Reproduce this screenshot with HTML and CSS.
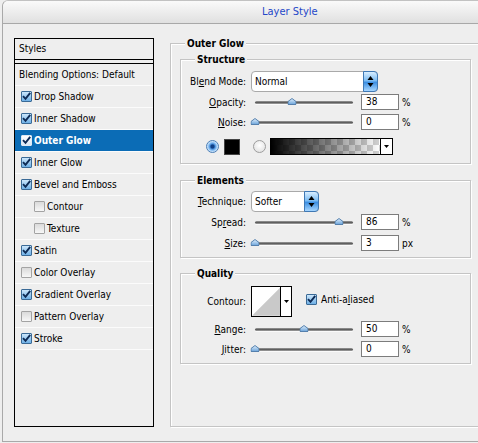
FILE: index.html
```html
<!DOCTYPE html>
<html>
<head>
<meta charset="utf-8">
<title>Layer Style</title>
<link rel="stylesheet" href="styles.css">
</head>
<body>
<div class="window">
  <div class="titlebar">Layer Style</div>
  <div class="content">
    <div class="stylelist">
      <div class="list-head">Styles</div>
      <div class="item blend">Blending Options: Default</div>
      <div class="item"><span class="cb on"><svg viewBox="0 0 9 9" width="9" height="9"><path d="M1 4.2 L3.5 6.9 L8.2 0.8" fill="none" stroke="#0e2b55" stroke-width="1.9"/></svg></span>Drop Shadow</div>
      <div class="item"><span class="cb on"><svg viewBox="0 0 9 9" width="9" height="9"><path d="M1 4.2 L3.5 6.9 L8.2 0.8" fill="none" stroke="#0e2b55" stroke-width="1.9"/></svg></span>Inner Shadow</div>
      <div class="item selected"><span class="cb on"><svg viewBox="0 0 9 9" width="9" height="9"><path d="M1 4.2 L3.5 6.9 L8.2 0.8" fill="none" stroke="#0e2b55" stroke-width="1.9"/></svg></span>Outer Glow</div>
      <div class="item"><span class="cb on"><svg viewBox="0 0 9 9" width="9" height="9"><path d="M1 4.2 L3.5 6.9 L8.2 0.8" fill="none" stroke="#0e2b55" stroke-width="1.9"/></svg></span>Inner Glow</div>
      <div class="item"><span class="cb on"><svg viewBox="0 0 9 9" width="9" height="9"><path d="M1 4.2 L3.5 6.9 L8.2 0.8" fill="none" stroke="#0e2b55" stroke-width="1.9"/></svg></span>Bevel and Emboss</div>
      <div class="item sub"><span class="cb"></span>Contour</div>
      <div class="item sub"><span class="cb"></span>Texture</div>
      <div class="item"><span class="cb on"><svg viewBox="0 0 9 9" width="9" height="9"><path d="M1 4.2 L3.5 6.9 L8.2 0.8" fill="none" stroke="#0e2b55" stroke-width="1.9"/></svg></span>Satin</div>
      <div class="item"><span class="cb"></span>Color Overlay</div>
      <div class="item"><span class="cb on"><svg viewBox="0 0 9 9" width="9" height="9"><path d="M1 4.2 L3.5 6.9 L8.2 0.8" fill="none" stroke="#0e2b55" stroke-width="1.9"/></svg></span>Gradient Overlay</div>
      <div class="item"><span class="cb"></span>Pattern Overlay</div>
      <div class="item"><span class="cb on"><svg viewBox="0 0 9 9" width="9" height="9"><path d="M1 4.2 L3.5 6.9 L8.2 0.8" fill="none" stroke="#0e2b55" stroke-width="1.9"/></svg></span>Stroke</div>
    </div>

    <div class="main">
    <fieldset class="group outer">
      <legend>Outer Glow</legend>

      <fieldset class="group inner structure">
        <legend>Structure</legend>
        <div class="row tall">
          <label>Bl<u>e</u>nd Mode:</label>
          <div class="popup blendpop"><span class="val">Normal</span><span class="stepper"><svg width="7" height="13" viewBox="0 0 7 13"><path d="M3.5 1 L6.5 5 L0.5 5 Z M0.5 8 L6.5 8 L3.5 12 Z" fill="#000"/></svg></span></div>
        </div>
        <div class="row r-opacity">
          <label><u>O</u>pacity:</label>
          <div class="slider"><span class="thumb" style="left:38%"><svg width="9" height="7" viewBox="0 0 9 7"><defs><linearGradient id="tg1" x1="0" y1="0" x2="0" y2="1"><stop offset="0" stop-color="#e4f1fd"/><stop offset="1" stop-color="#6aa3da"/></linearGradient></defs><path d="M0.5 6.5 V3.5 L4.5 0.5 L8.5 3.5 V6.5 Z" fill="url(#tg1)" stroke="#5580ad"/></svg></span></div>
          <span class="field">38</span><span class="unit">%</span>
        </div>
        <div class="row r-noise">
          <label><u>N</u>oise:</label>
          <div class="slider"><span class="thumb" style="left:0%"><svg width="9" height="7" viewBox="0 0 9 7"><path d="M0.5 6.5 V3.5 L4.5 0.5 L8.5 3.5 V6.5 Z" fill="url(#tg1)" stroke="#5580ad"/></svg></span></div>
          <span class="field">0</span><span class="unit">%</span>
        </div>
        <div class="color-row">
          <span class="radio on"></span>
          <span class="swatch"></span>
          <span class="radio off"></span>
          <span class="gradbox"><span class="gradfill"></span><span class="gradarrow"><svg width="5" height="3" viewBox="0 0 5 3"><path d="M0 0 H5 L2.5 3 Z" fill="#000"/></svg></span></span>
        </div>
      </fieldset>

      <fieldset class="group inner elements">
        <legend>Elements</legend>
        <div class="row tall">
          <label><u>T</u>echnique:</label>
          <div class="popup techpop"><span class="val">Softer</span><span class="stepper"><svg width="7" height="13" viewBox="0 0 7 13"><path d="M3.5 1 L6.5 5 L0.5 5 Z M0.5 8 L6.5 8 L3.5 12 Z" fill="#000"/></svg></span></div>
        </div>
        <div class="row r-spread">
          <label>Sp<u>r</u>ead:</label>
          <div class="slider"><span class="thumb" style="left:86%"><svg width="9" height="7" viewBox="0 0 9 7"><path d="M0.5 6.5 V3.5 L4.5 0.5 L8.5 3.5 V6.5 Z" fill="url(#tg1)" stroke="#5580ad"/></svg></span></div>
          <span class="field">86</span><span class="unit">%</span>
        </div>
        <div class="row r-size">
          <label><u>S</u>ize:</label>
          <div class="slider"><span class="thumb" style="left:0%"><svg width="9" height="7" viewBox="0 0 9 7"><path d="M0.5 6.5 V3.5 L4.5 0.5 L8.5 3.5 V6.5 Z" fill="url(#tg1)" stroke="#5580ad"/></svg></span></div>
          <span class="field">3</span><span class="unit">px</span>
        </div>
      </fieldset>

      <fieldset class="group inner quality">
        <legend>Quality</legend>
        <div class="row contour-row">
          <label>Contour:</label>
          <span class="contour"><svg class="preview" width="29" height="29" viewBox="0 0 29 29"><polygon points="0,29 29,0 29,29" fill="#c9c9c9"/></svg><span class="carrow"><svg width="5" height="3" viewBox="0 0 5 3"><path d="M0 0 H5 L2.5 3 Z" fill="#000"/></svg></span></span>
          <span class="aa"><span class="cb on"><svg viewBox="0 0 9 9" width="9" height="9"><path d="M1 4.2 L3.5 6.9 L8.2 0.8" fill="none" stroke="#0e2b55" stroke-width="1.9"/></svg></span>Anti-a<u>l</u>iased</span>
        </div>
        <div class="row r-range">
          <label><u>R</u>ange:</label>
          <div class="slider"><span class="thumb" style="left:50%"><svg width="9" height="7" viewBox="0 0 9 7"><path d="M0.5 6.5 V3.5 L4.5 0.5 L8.5 3.5 V6.5 Z" fill="url(#tg1)" stroke="#5580ad"/></svg></span></div>
          <span class="field">50</span><span class="unit">%</span>
        </div>
        <div class="row r-jitter">
          <label><u>J</u>itter:</label>
          <div class="slider"><span class="thumb" style="left:0%"><svg width="9" height="7" viewBox="0 0 9 7"><path d="M0.5 6.5 V3.5 L4.5 0.5 L8.5 3.5 V6.5 Z" fill="url(#tg1)" stroke="#5580ad"/></svg></span></div>
          <span class="field">0</span><span class="unit">%</span>
        </div>
      </fieldset>
      <div class="filler"></div>
    </fieldset>
    </div>
  </div>
</div>
</body>
</html>
```

FILE: styles.css
```css
* { box-sizing: border-box; }
html, body { margin: 0; padding: 0; }
body {
  width: 478px;
  height: 443px;
  overflow: hidden;
  background: #eeeeee;
  font-family: "DejaVu Sans Condensed", "DejaVu Sans", sans-serif;
  font-stretch: condensed;
  font-size: 10px;
  color: #000;
}
.window {
  margin-left: 2px;
  width: 476px;
  height: 442px;
  border-top: 1px solid #c2c2c2;
  border-left: 1px solid #a9a9a9;
  border-bottom: 1px solid #a9a9a9;
  border-top-left-radius: 6px;
  background: #eeeeee;
  overflow: hidden;
}
.titlebar {
  height: 23px;
  border-bottom: 1px solid #a8a8a8;
  background: linear-gradient(#fafafa, #e0e0e0);
  border-top-left-radius: 5px;
  padding-left: 259px;
  padding-top: 1px;
  font-size: 11px;
  line-height: 20px;
  color: #2447c8;
}
.content {
  display: flex;
  align-items: flex-start;
  height: 417px;
  padding: 14px 0 0 11px;
}

/* style list */
.stylelist {
  flex: 0 0 140px;
  width: 140px;
  height: 389px;
  overflow: hidden;
  border: 1px solid #000;
  background: #eeeeee;
}
.list-head {
  height: 21px;
  border-bottom: 1px solid #000;
  padding-left: 4px;
  line-height: 20px;
}
.item {
  height: 22px;
  border-bottom: 1px solid #fbfbfb;
  display: flex;
  align-items: center;
  padding-left: 6px;
  white-space: nowrap;
}
.item.blend {
  height: 23px;
  margin-top: 3px;
  border-top: 1px solid #000;
  padding-left: 4px;
}
.item.sub { padding-left: 19px; }
.item.selected {
  background: #0b6cb6;
  color: #fff;
  font-weight: bold;
}
.cb {
  flex-shrink: 0;
  display: inline-flex;
  align-items: center;
  justify-content: center;
  width: 11px;
  height: 11px;
  margin-right: 2px;
  border: 1px solid #a3a3a3;
  border-radius: 1px;
  background: linear-gradient(#dadada, #f7f7f7);
}
.cb.on {
  border-color: #3a6a96;
  background: linear-gradient(#cbe6fb, #6fb0e6);
}
.item.selected .cb.on {
  border-color: #dfe9f3;
  background: linear-gradient(#ffffff, #dbe9f6);
}

/* right side */
.main {
  flex: 0 0 330px;
  height: 389px;
  margin-left: 16px;
  display: flex;
  flex-direction: column;
}

/* group boxes */
fieldset.group {
  margin: 0;
  padding: 0;
  min-width: 0;
  border: 1px solid #c4c4c4;
  box-shadow: inset 1px 1px 0 #fff, 1px 1px 0 #fff;
}
fieldset.group > legend {
  margin-left: 14px;
  padding: 0 2px;
  font-weight: bold;
  line-height: 11px;
  background: #eeeeee;
}
fieldset.outer {
  width: 330px;
  flex: 1 1 auto;
  display: flex;
  flex-direction: column;
  align-items: flex-start;
}
fieldset.inner {
  flex: 0 0 auto;
  width: 291px;
  margin-left: 9px;
}
fieldset.structure { margin-top: 5px; padding: 6px 0 8px 0; }
fieldset.elements { margin-top: 11px; padding: 5px 0 6px 0; }
fieldset.quality { margin-top: 10px; padding: 7px 0 6px 0; }
.filler { flex: 1 1 auto; }

.row {
  display: flex;
  align-items: center;
  height: 16px;
  white-space: nowrap;
}
.row.tall { height: 21px; }
.row label {
  flex-shrink: 0;
  width: 65px;
  margin-right: 5px;
  text-align: right;
}
.r-opacity, .r-spread { margin-top: 2px; }
.r-noise { margin-top: 4px; }
.r-size { margin-top: 5px; }
.r-range, .r-jitter { margin-top: 4px; }

/* popup menus */
.popup {
  display: flex;
  align-items: center;
  height: 21px;
  border: 1px solid #a9a9a9;
  border-radius: 4px;
  background: #fff;
  padding-left: 3px;
}
.blendpop { width: 127px; }
.techpop { width: 68px; }
.popup .val { flex: 1; }
.stepper {
  display: flex;
  align-items: center;
  justify-content: center;
  width: 15px;
  height: 21px;
  margin: -1px -1px -1px 0;
  border: 1px solid #3f78b4;
  border-radius: 0 4px 4px 0;
  background: linear-gradient(#d9eeff, #7cbcf3 45%, #3d8fe2 55%, #a6d6ff);
}

/* sliders */
.slider {
  position: relative;
  flex-shrink: 0;
  width: 98px;
  height: 3px;
  margin-left: 4px;
  margin-right: 8px;
  border-radius: 2px;
  background: linear-gradient(#9d9d9d, #5f5f5f 50%, #a8a8a8);
  box-shadow: 0 1px 0 #fafafa;
}
.thumb {
  position: absolute;
  top: -3px;
  width: 9px;
  height: 7px;
  transform: translateX(-50%);
  display: block;
}
.thumb svg { display: block; }
.field {
  flex-shrink: 0;
  width: 38px;
  height: 16px;
  border: 1px solid #7c7c7c;
  background: #fff;
  padding-left: 4px;
  line-height: 14px;
}
.unit { margin-left: 3px; }

/* color row */
.color-row {
  display: flex;
  align-items: center;
  height: 17px;
  margin-top: 8px;
  padding-left: 25px;
}
.radio {
  flex-shrink: 0;
  width: 13px;
  height: 13px;
  border-radius: 50%;
}
.radio.on {
  border: 1px solid #4a7db5;
  background: radial-gradient(circle at 50% 50%, #0f3f86 0 1.5px, #4f95e0 2.8px, #a7d1f8 4.5px, #e6f2fd 6px);
}
.radio.off {
  margin-left: 13px;
  border: 1px solid #9d9d9d;
  background: radial-gradient(circle at 50% 40%, #ffffff, #dcdcdc);
}
.swatch {
  flex-shrink: 0;
  width: 16px;
  height: 16px;
  margin-left: 5px;
  border: 1px solid #444;
  background: #000;
}
.gradbox {
  display: flex;
  width: 123px;
  height: 17px;
  margin-left: 4px;
  border: 1px solid #000;
}
.gradfill {
  flex: 1;
  background:
    linear-gradient(to right, #000, rgba(0,0,0,0)),
    repeating-conic-gradient(#d2d2d2 0 25%, #ffffff 0 50%) 0 0 / 12px 12px;
}
.gradarrow, .carrow {
  display: flex;
  align-items: center;
  justify-content: center;
  width: 12px;
  border-left: 1px solid #000;
  background: #fff;
}

/* quality */
.row.contour-row {
  height: 31px;
}
.contour {
  display: flex;
  flex-shrink: 0;
  width: 41px;
  height: 31px;
  border: 1px solid #000;
  background: #fff;
}
.contour .preview { display: block; }
.contour .carrow { width: 11px; }
.aa {
  display: flex;
  align-items: center;
  align-self: flex-start;
  margin-top: 8px;
  margin-left: 14px;
}
.aa .cb { margin-right: 4px; }
```
